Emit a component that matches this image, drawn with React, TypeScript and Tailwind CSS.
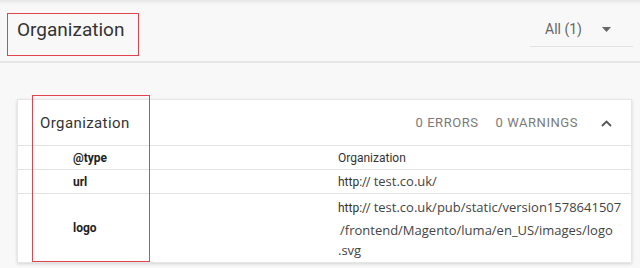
import React from 'react';

const sans = { fontFamily: 'Roboto, "Liberation Sans", sans-serif' };
const seg = { fontFamily: '"Open Sans", "Liberation Sans", sans-serif' };

const Row = ({ label, children, className }: { label: string; children: React.ReactNode; className: string }) => (
    <div className={`flex border-t border-[#e3e3e3] ${className}`}>
        <div className="w-[320px] pl-[55px] text-[12px] font-bold text-[#222]">{label}</div>
        <div className="flex-1 text-[12px] text-[#333]">{children}</div>
    </div>
);

const App = () => {
    return (
        <div className="relative w-[640px] h-[268px] overflow-hidden bg-[#f8f8f8]" style={sans}>
            {/* top bar */}
            <div className="relative h-[63px] flex items-center justify-between border-b-2 border-[#e6e6e6] shadow-[inset_0_5px_5px_-4px_rgba(0,0,0,0.12)]">
                <h1 className="pl-[17px] text-[19px] text-[#333]">Organization</h1>
                <div className="mr-[7px] mb-[2px] w-[103px] h-[34px] flex items-center justify-between pl-[15px] pr-[22px] border-b border-[#e2e2e2]">
                    <span className="text-[14px] text-[#666]">All (1)</span>
                    <svg width="9" height="5" viewBox="0 0 9 5">
                        <path d="M0 0h9L4.5 5z" fill="#666" />
                    </svg>
                </div>
                <div className="absolute left-[7px] top-[13px] w-[132px] h-[43px] border border-[#e0454f]" />
            </div>

            {/* card */}
            <div className="pt-[36px] pl-[17px] pr-[8px]">
                <div className="relative bg-white border border-[#e6e6e6] shadow-[0_1px_3px_rgba(0,0,0,0.15)]">
                    <div className="h-[45px] flex items-center justify-between pl-[22px] pr-[19px] pt-[1px]">
                        <span className="text-[15px] tracking-[0.4px] text-[#333]">Organization</span>
                        <div className="flex items-center text-[13px] tracking-[0.55px] text-[#7a7a7a]">
                            <span>0 ERRORS</span>
                            <span className="ml-[17px]">0 WARNINGS</span>
                            <svg className="ml-[23px]" width="11" height="7" viewBox="0 0 11 7">
                                <path d="M1 6l4.5-4.5L10 6" stroke="#555" strokeWidth="1.8" fill="none" />
                            </svg>
                        </div>
                    </div>
                    <Row label="@type" className="h-[24px] items-center">
                        Organization
                    </Row>
                    <Row label="url" className="h-[24px] items-center">
                        http:// <span className="text-[13px] text-[#444]" style={seg}>test.co.uk/</span>
                    </Row>
                    <Row label="logo" className="h-[69px] items-center">
                        <div className="leading-[22px] -mt-[2px]">
                            <div>
                                http:// <span className="text-[13px] text-[#444]" style={seg}>test.co.uk/pub/static/version1578641507</span>
                            </div>
                            <div className="pl-[2px] text-[13px] text-[#444]" style={seg}>/frontend/Magento/luma/en_US/images/logo</div>
                            <div className="text-[13px] text-[#444] leading-[18px]" style={seg}>.svg</div>
                        </div>
                    </Row>
                    <div className="absolute left-[14px] -top-[5px] w-[118px] h-[167px] border border-[#e0454f]" />
                </div>
            </div>
        </div>
    );
};

export default App;
